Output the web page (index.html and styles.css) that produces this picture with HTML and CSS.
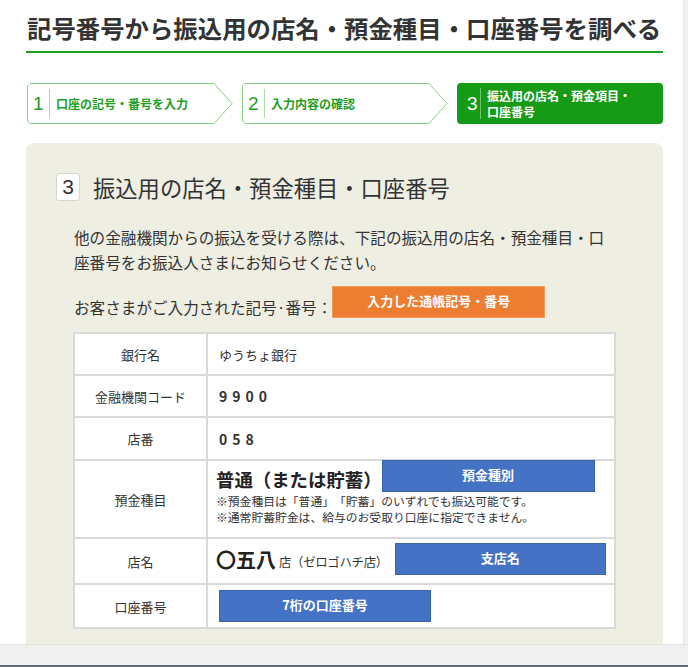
FILE: index.html
```html
<!DOCTYPE html>
<html lang="ja">
<head>
<meta charset="utf-8">
<title>記号番号から振込用の店名・預金種目・口座番号を調べる</title>
<link rel="stylesheet" href="styles.css">
</head>
<body>
<div class="screen">
  <div class="main">
    <div class="content">
      <h1 class="title">記号番号から振込用の店名・預金種目・口座番号を調べる</h1>
      <ol class="steps">
        <li class="step">
          <svg class="step-shape" viewBox="0 0 206 41" preserveAspectRatio="none"><polygon points="0.5,3 3,0.5 187,0.5 205,20.5 187,40.5 3,40.5 0.5,38" /></svg>
          <span class="step-num">1</span><span class="step-label">口座の記号・番号を入力</span>
        </li>
        <li class="step">
          <svg class="step-shape" viewBox="0 0 206 41" preserveAspectRatio="none"><polygon points="0.5,3 3,0.5 187,0.5 205,20.5 187,40.5 3,40.5 0.5,38" /></svg>
          <span class="step-num">2</span><span class="step-label">入力内容の確認</span>
        </li>
        <li class="step step-current">
          <span class="step-num">3</span><span class="step-label">振込用の店名・預金項目・<br>口座番号</span>
        </li>
      </ol>
      <section class="panel">
        <h2 class="panel-heading"><span class="panel-num">3</span>振込用の店名・預金種目・口座番号</h2>
        <div class="panel-body">
          <p class="lead">他の金融機関からの振込を受ける際は、下記の振込用の店名・預金種目・口座番号をお振込人さまにお知らせください。</p>
          <div class="entered">
            <span class="entered-label">お客さまがご入力された記号·番号：</span>
            <span class="tag tag-orange">入力した通帳記号・番号</span>
          </div>
          <table class="info">
            <tr class="r1"><th>銀行名</th><td>ゆうちょ銀行</td></tr>
            <tr class="r2"><th>金融機関コード</th><td><span class="digits">9900</span></td></tr>
            <tr class="r3"><th>店番</th><td><span class="digits">058</span></td></tr>
            <tr class="r4"><th>預金種目</th><td>
              <div class="kind-line"><span class="kind">普通（または貯蓄）</span><span class="tag tag-blue tag-kind">預金種別</span></div>
              <p class="note">※預金種目は「普通」「貯蓄」のいずれでも振込可能です。</p>
              <p class="note">※通常貯蓄貯金は、給与のお受取り口座に指定できません。</p>
            </td></tr>
            <tr class="r5"><th>店名</th><td>
              <div class="branch-line"><span class="branch">〇五八</span><span class="branch-sub">店（ゼロゴハチ店）</span><span class="tag tag-blue tag-branch">支店名</span></div>
            </td></tr>
            <tr class="r6"><th>口座番号</th><td><span class="tag tag-blue tag-acct">7桁の口座番号</span></td></tr>
          </table>
        </div>
      </section>
    </div>
    <div class="scroll-v"></div>
  </div>
  <div class="bottombar"></div>
</div>
</body>
</html>
```
FILE: styles.css
```css
* { box-sizing: border-box; }
html, body { margin: 0; padding: 0; background: #fff; }
body {
  font-family: "Noto Sans CJK JP", "Noto Sans", sans-serif;
  color: #333;
  width: 688px;
  height: 667px;
  overflow: hidden;
  text-spacing-trim: space-all;
}
.screen { display: flex; flex-direction: column; height: 667px; }
.main { display: flex; height: 644px; overflow: hidden; }
.content { width: 683px; padding-left: 26px; padding-right: 20px; }
.scroll-v { width: 5px; background: #f0f0f0; border-left: 1px solid #e6e6e6; }
.bottombar { height: 23px; background: #f0f0f0; border-top: 1px solid #e2e2e2; border-bottom: 2px solid #5d6a74; }

.title {
  margin: 0;
  padding: 12px 0 8px 1px;
  font-size: 24.4px;
  line-height: 31px;
  font-weight: 700;
  color: #333;
  white-space: nowrap;
  border-bottom: 2px solid #1f9e1f;
}

.steps {
  list-style: none;
  margin: 30px 0 0 1px;
  padding: 0;
  display: grid;
  grid-template-columns: 206px 206px 206px;
  column-gap: 9px;
}
.step {
  position: relative;
  height: 41px;
  display: flex;
  align-items: center;
  padding-left: 6px;
  color: #1f9e1f;
}
.step-shape { position: absolute; left: 0; top: 0; width: 100%; height: 100%; z-index: 0; }
.step-shape polygon { fill: #fff; stroke: #86cf86; stroke-width: 1; }
.step-num {
  position: relative;
  font-family: "Liberation Sans", "Noto Sans", sans-serif;
  font-size: 19px;
  line-height: 29px;
  width: 17px;
  padding-right: 5px;
  border-right: 1px solid #a9dca9;
  margin-right: 6px;
  text-align: left;
  flex-shrink: 0;
}
.step-label {
  position: relative;
  font-size: 12px;
  font-weight: 700;
  line-height: 16px;
  white-space: nowrap;
}
.step-current {
  background: #169b16;
  border-radius: 4px;
  color: #fff;
  padding-left: 10px;
}
.step-current .step-num { width: 14px; border-right-color: #6cc46c; padding-right: 3px; line-height: 31px; }
.step-current .step-label { font-size: 12px; line-height: 16px; }

.panel {
  margin-top: 19px;
  background: #eeeee3;
  border-radius: 8px 8px 0 0;
  padding: 30px 0 40px 30px;
  width: 637px;
}
.panel-heading {
  margin: 0;
  display: flex;
  align-items: center;
  font-size: 22.3px;
  font-weight: 400;
  line-height: 28px;
  color: #333;
}
.panel-num {
  width: 24px;
  height: 28px;
  background: #fff;
  border: 1px solid #d6d6cc;
  border-radius: 3px;
  font-family: "Liberation Sans", "Noto Sans", sans-serif;
  font-size: 21px;
  line-height: 26px;
  text-align: center;
  margin-right: 13px;
}
.panel-body { padding-left: 18px; }
.lead {
  margin: 24px 0 0;
  width: 540px;
  font-size: 15.6px;
  line-height: 25px;
  color: #333;
}
.entered {
  margin-top: 11px;
  display: flex;
  align-items: flex-end;
}
.entered-label { font-size: 15.6px; line-height: 22px; color: #333; }
.tag {
  display: inline-block;
  color: #fff;
  font-size: 13px;
  font-weight: 700;
  text-align: center;
  white-space: nowrap;
  flex-shrink: 0;
}
.tag-orange {
  width: 213px;
  height: 32px;
  line-height: 28px;
  background: #ed7d31;
  border: 1px solid #f09a5e;
}
.tag-blue {
  background: #4472c4;
  border: 1px solid #3a62a8;
  height: 32px;
  line-height: 28px;
}

.info {
  margin: 14px 0 0 -1px;
  width: 543px;
  border-collapse: collapse;
  background: #fff;
  border: 2px solid #d9d9d9;
  table-layout: fixed;
}
.info th, .info td {
  border: 2px solid #d9d9d9;
  padding: 0;
  vertical-align: middle;
}
.info th {
  width: 133px;
  font-size: 13px;
  font-weight: 400;
  color: #333;
  text-align: center;
}
.info td {
  padding-left: 11px;
  font-size: 13px;
  color: #333;
  white-space: nowrap;
}
.r1 { height: 42px; }
.r2 { height: 42px; }
.r3 { height: 43px; }
.r4 { height: 78px; }
.r5 { height: 46px; }
.r6 { height: 44px; }
.digits { font-weight: 700; font-size: 14px; letter-spacing: 5px; }
.r4 td { vertical-align: top; padding-left: 8px; }
.kind-line { display: flex; align-items: flex-start; }
.kind { font-size: 18.4px; font-weight: 700; line-height: 24px; margin-top: 6px; color: #222; flex-shrink: 0; }
.tag-kind { width: 213px; margin-top: -1px; }
.note { margin: 0; font-size: 11.8px; line-height: 16px; color: #333; }
.kind-line + .note { margin-top: 1px; }
.r5 td { padding-left: 8px; vertical-align: top; }
.branch-line { display: flex; align-items: flex-start; }
.branch { font-size: 20px; font-weight: 700; line-height: 26px; margin-top: 8px; color: #222; flex-shrink: 0; white-space: nowrap; }
.branch-sub { font-size: 12.4px; margin-top: 14px; margin-left: 3px; flex-shrink: 0; white-space: nowrap; letter-spacing: -0.3px; }
.tag-branch { width: 211px; margin-top: 4px; margin-left: 7px; }
.tag-acct { width: 212px; }
.r6 td { padding-left: 11px; }
```
